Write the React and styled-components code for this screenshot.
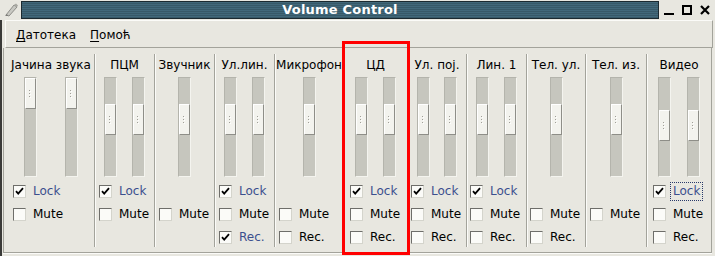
import styled, { createGlobalStyle } from 'styled-components'

const GlobalStyle = createGlobalStyle`
  html, body {
    margin: 0;
    padding: 0;
    background: #e8e7e0;
  }
  body {
    font-family: "DejaVu Sans", "Liberation Sans", sans-serif;
    font-size: 12px;
    color: #000;
  }
`

const Window = styled.div`
  position: relative;
  width: 715px;
  height: 256px;
  background: #e8e7e0;
  overflow: hidden;
`

const TitleBar = styled.div`
  display: flex;
  align-items: center;
  height: 20px;
  padding: 0 0 0 2px;
  box-sizing: border-box;
`

const WinIcon = styled.div`
  width: 18px;
  height: 18px;
  margin-right: 1px;
  display: flex;
  align-items: center;
  justify-content: center;
`

const TitleStrip = styled.div`
  flex: 1;
  height: 18px;
  box-sizing: border-box;
  border: 1px solid #1b2a30;
  background: repeating-linear-gradient(
    to bottom,
    #41687a 0px,
    #41687a 1px,
    #375968 1px,
    #375968 2px
  );
  color: #fff;
  font-weight: bold;
  font-size: 13px;
  line-height: 16px;
  text-align: center;
  letter-spacing: 0.2px;
`

const WinButtons = styled.div`
  display: flex;
  align-items: center;
  gap: 8px;
  padding: 0 5px 0 5px;
`

const WinButton = styled.svg`
  width: 10px;
  height: 10px;
  display: block;
`

const Body = styled.div`
  border-left: 2px solid #3a3a38;
  padding: 0 2px 0 1px;
  height: 236px;
  box-sizing: border-box;
`

const MenuBar = styled.div`
  display: flex;
  align-items: center;
  height: 28px;
  margin-left: 2px;
  box-sizing: border-box;
  border-top: 1px solid #fbfbf8;
  border-left: 1px solid #fbfbf8;
  border-right: 1px solid #a3a39b;
  border-bottom: 1px solid #a3a39b;
  padding-left: 10px;
  gap: 14px;
`

const MenuItem = styled.span`
  font-size: 12px;
  color: #000;
  padding-top: 1px;

  u {
    text-decoration: underline;
    text-underline-offset: 2px;
  }
`

const Mixer = styled.div`
  display: flex;
  height: 205px;
  box-sizing: border-box;
  padding-top: 6px;
  border-left: 1px solid #a3a39b;
  border-bottom: 1px solid #a3a39b;
  border-right: 1px solid #a3a39b;
  margin-right: 1px;
  box-shadow: 0 1px 0 #fbfbf8;
`

const Channel = styled.div`
  width: ${(p) => p.$w}px;
  height: 193px;
  box-sizing: border-box;
  padding-left: ${(p) => p.$padL || 0}px;
  display: flex;
  flex-direction: column;
  border-left: ${(p) => (p.$first ? 'none' : '1px solid #a3a39b')};
  box-shadow: ${(p) => (p.$first ? 'none' : 'inset 1px 0 0 #fbfbf8')};
`

const ChannelName = styled.div`
  height: 22px;
  line-height: 22px;
  text-align: center;
  white-space: nowrap;
  font-size: 12px;
  overflow: visible;
`

const SliderRow = styled.div`
  display: flex;
  justify-content: center;
  gap: ${(p) => p.$gap}px;
  margin-top: 1px;
`

const Trough = styled.div`
  width: 13px;
  height: 100px;
  box-sizing: border-box;
  background: #c6c6be;
  border-top: 1px solid #b4b4ac;
  border-left: 1px solid #b4b4ac;
  border-right: 1px solid #f4f4ef;
  border-bottom: 1px solid #f4f4ef;
`

const Thumb = styled.div`
  width: 11px;
  height: 31px;
  margin-top: ${(p) => p.$pos}px;
  box-sizing: border-box;
  background: #f3f3ee;
  border-top: 1px solid #ffffff;
  border-left: 1px solid #ffffff;
  border-right: 1px solid #8e8e88;
  border-bottom: 1px solid #8e8e88;
  display: flex;
  align-items: center;
  justify-content: center;
`

const Checks = styled.div`
  display: flex;
  flex-direction: column;
  margin-top: 3px;
  padding-left: ${(p) => p.$pad}px;
`

const CheckRow = styled.div`
  display: flex;
  align-items: center;
  height: 23px;
`

const Box = styled.span`
  width: 13px;
  height: 13px;
  box-sizing: border-box;
  background: #fbfbf8;
  border-top: 1px solid #6e6e6a;
  border-left: 1px solid #6e6e6a;
  border-right: 1px solid #d4d4cc;
  border-bottom: 1px solid #d4d4cc;
  display: flex;
  align-items: center;
  justify-content: center;
  flex-shrink: 0;
`

const CheckLabel = styled.span`
  margin-left: 5px;
  padding: 1px 2px;
  font-size: 12px;
  line-height: 15px;
  white-space: nowrap;
  color: ${(p) => (p.$on ? '#3b4f8e' : '#000')};
  outline: ${(p) => (p.$focus ? '1px dotted #2a3a6a' : 'none')};
  outline-offset: 0;
`

const Marker = styled.div`
  position: absolute;
  left: 342px;
  top: 41px;
  width: 68px;
  height: 214px;
  box-sizing: border-box;
  border: 3px solid #ff0000;
  pointer-events: none;
`

const Grip = () => (
  <svg width="5" height="9" viewBox="0 0 5 9">
    <rect x="1" y="1" width="1" height="1" fill="#a09f98" />
    <rect x="2" y="2" width="1" height="1" fill="#fff" />
    <rect x="1" y="4" width="1" height="1" fill="#a09f98" />
    <rect x="2" y="5" width="1" height="1" fill="#fff" />
    <rect x="1" y="7" width="1" height="1" fill="#a09f98" />
    <rect x="2" y="8" width="1" height="1" fill="#fff" />
  </svg>
)

const Tick = () => (
  <svg width="9" height="9" viewBox="0 0 9 9">
    <path d="M1 4.2 L3.2 6.6 L8 1.2" stroke="#000" strokeWidth="1.8" fill="none" />
  </svg>
)

function Check({ label, on, focus }) {
  return (
    <CheckRow>
      <Box>{on && <Tick />}</Box>
      <CheckLabel $on={on} $focus={focus}>
        {label}
      </CheckLabel>
    </CheckRow>
  )
}

const channels = [
  { name: 'Јачина звука', w: 90, padL: 4, pad: 5, sliders: [0, 0], gap: 28, lock: true, mute: false },
  { name: 'ПЦМ', w: 60, pad: 4, sliders: [26, 26], gap: 15, lock: true, mute: false },
  { name: 'Звучник', w: 60, pad: 4, sliders: [26], mute: false },
  { name: 'Ул.лин.', w: 60, pad: 4, sliders: [26, 26], gap: 15, lock: true, mute: false, rec: true },
  { name: 'Микрофон', w: 69, pad: 4, sliders: [26], mute: false, rec: false },
  { name: 'ЦД', w: 64, pad: 6, sliders: [26, 26], gap: 15, lock: true, mute: false, rec: false },
  { name: 'Ул. пој.', w: 59, pad: 3, sliders: [26, 26], gap: 14, lock: true, mute: false, rec: false },
  { name: 'Лин. 1', w: 60, pad: 3, sliders: [26, 26], gap: 15, lock: true, mute: false, rec: false },
  { name: 'Тел. ул.', w: 59, pad: 3, sliders: [26], mute: false, rec: false },
  { name: 'Тел. из.', w: 61, pad: 4, sliders: [26], mute: false },
  { name: 'Видео', w: 65, pad: 6, sliders: [32, 32], gap: 16, lock: true, lockFocus: true, mute: false, rec: false },
]

export default function App() {
  return (
    <>
      <GlobalStyle />
      <Window>
        <TitleBar>
          <WinIcon>
            <svg width="16" height="16" viewBox="0 0 16 16">
              <path d="M3 13 L11 3 L14 5 L6 14 Z" fill="#c9c9c3" stroke="#8d8d88" strokeWidth="1" />
              <path d="M2 14 L4 12 L5 14 Z" fill="#7a7a76" />
              <path d="M11 3 L13 1.5 L15 3.5 L14 5 Z" fill="#a8a8a2" />
            </svg>
          </WinIcon>
          <TitleStrip>Volume Control</TitleStrip>
          <WinButtons>
            <WinButton viewBox="0 0 10 10">
              <rect x="0" y="8" width="10" height="2" fill="#000" />
            </WinButton>
            <WinButton viewBox="0 0 10 10">
              <rect x="1" y="1" width="8" height="8" fill="none" stroke="#000" strokeWidth="2" />
            </WinButton>
            <WinButton viewBox="0 0 10 10">
              <path d="M1 1 L9 9 M9 1 L1 9" stroke="#000" strokeWidth="2.2" />
            </WinButton>
          </WinButtons>
        </TitleBar>
        <Body>
          <MenuBar>
            <MenuItem>
              <u>Д</u>атотека
            </MenuItem>
            <MenuItem>
              <u>П</u>омоћ
            </MenuItem>
          </MenuBar>
          <Mixer>
            {channels.map((c, i) => (
              <Channel key={c.name} $w={c.w} $padL={c.padL} $first={i === 0}>
                <ChannelName>{c.name}</ChannelName>
                <SliderRow $gap={c.gap || 0}>
                  {c.sliders.map((pos, j) => (
                    <Trough key={j}>
                      <Thumb $pos={pos}>
                        <Grip />
                      </Thumb>
                    </Trough>
                  ))}
                </SliderRow>
                <Checks $pad={c.pad}>
                  {c.lock !== undefined ? (
                    <Check label="Lock" on={c.lock} focus={c.lockFocus} />
                  ) : (
                    <CheckRow />
                  )}
                  <Check label="Mute" on={c.mute} />
                  {c.rec !== undefined && <Check label="Rec." on={c.rec} />}
                </Checks>
              </Channel>
            ))}
          </Mixer>
        </Body>
        <Marker />
      </Window>
    </>
  )
}
